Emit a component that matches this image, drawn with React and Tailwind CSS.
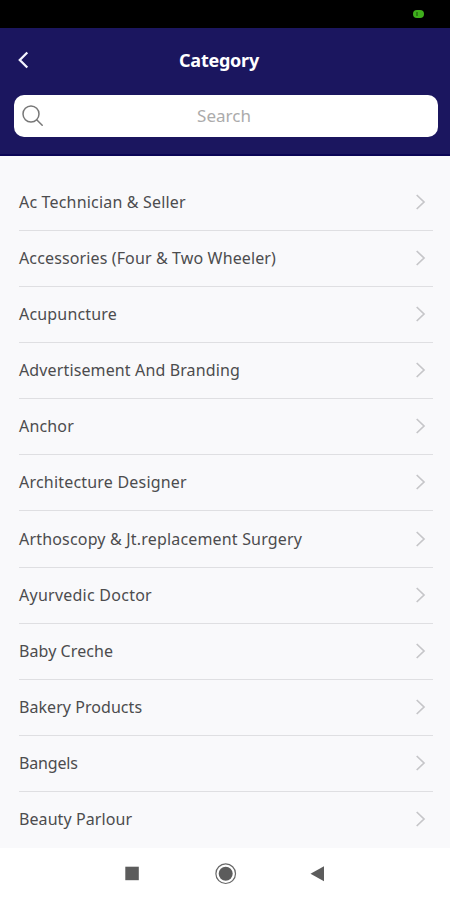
import React, { useState } from 'react';

const categories = [
  { name: 'Ac Technician & Seller', tracking: 'tracking-[0.18px]' },
  { name: 'Accessories (Four & Two Wheeler)', tracking: 'tracking-[0.13px]' },
  { name: 'Acupuncture', tracking: 'tracking-[0.18px]' },
  { name: 'Advertisement And Branding', tracking: 'tracking-[0.13px]' },
  { name: 'Anchor', tracking: 'tracking-[0.17px]' },
  { name: 'Architecture Designer', tracking: 'tracking-[0.2px]' },
  { name: 'Arthoscopy & Jt.replacement Surgery', tracking: 'tracking-[0.18px]' },
  { name: 'Ayurvedic Doctor', tracking: 'tracking-[0.25px]' },
  { name: 'Baby Creche', tracking: 'tracking-[0.08px]' },
  { name: 'Bakery Products', tracking: 'tracking-[0.05px]' },
  { name: 'Bangels', tracking: 'tracking-[-0.18px]' },
  { name: 'Beauty Parlour', tracking: 'tracking-[0.08px]' },
];

const StatusBar = () => (
  <div className="h-[28px] shrink-0 bg-black flex items-center justify-end pr-[26px]">
    <span className="w-[11px] h-[8px] rounded-full bg-[#3fae1c] flex items-center pl-[3px]">
      <span className="w-[2px] h-[4px] bg-[#2a7d12]" />
    </span>
  </div>
);

const Header = ({ query, onSearch }) => (
  <header className="h-[128px] shrink-0 bg-[#1b165f] border-b-2 border-[#0b0656]">
    {/* Title row */}
    <div className="grid grid-cols-[40px_1fr_40px] items-center h-[64px] pr-[12px]">
      <button className="pl-[17px]" title="Back">
        <svg width="12" height="18" viewBox="0 0 12 18" fill="none" stroke="#f4f4ff" strokeWidth="2.3">
          <path d="M10.3 1.5 L2.8 9 L10.3 16.5" />
        </svg>
      </button>
      <h1 className="text-center text-[18px] leading-6 font-bold tracking-[-0.25px] text-white">Category</h1>
    </div>

    {/* Search */}
    <label className="flex items-center h-[42px] ml-[14px] mr-[12px] mt-[3px] px-[8px] bg-white rounded-[10px]">
      <svg width="22" height="22" viewBox="0 0 22 22" fill="none" stroke="#777777" strokeWidth="1.5" strokeLinecap="round">
        <circle cx="9" cy="9" r="8" />
        <path d="M14.7 14.7 L20.2 20.2" />
      </svg>
      <input
        value={query}
        onChange={(e) => onSearch(e.target.value)}
        placeholder="Search"
        className="flex-1 min-w-0 pr-[26px] text-center text-[17px] text-[#333333] placeholder:text-[#ababab] outline-none"
      />
    </label>
  </header>
);

const CategoryRow = ({ name, tracking }) => (
  <li className="flex items-center justify-between h-[56.15px] ml-[19px] mr-[17px] pr-[7px] pb-[0.9px] border-b border-[#dfdfe2] last:border-transparent">
    <span className={`text-[16px] leading-6 text-[#4c4c4e] whitespace-nowrap ${tracking}`}>{name}</span>
    <svg width="11" height="16" viewBox="0 0 11 16" fill="none" stroke="#c6c6c9" strokeWidth="1.7">
      <path d="M1.7 1 L9 8 L1.7 15" />
    </svg>
  </li>
);

const NavBar = () => (
  <nav className="h-[52px] shrink-0 bg-white">
    <svg width="450" height="52" viewBox="0 0 450 52">
      <rect x="125.3" y="18.7" width="13.5" height="13.5" fill="#5c5c5c" />
      <circle cx="225.7" cy="25.7" r="9.8" fill="none" stroke="#686868" strokeWidth="1.2" />
      <circle cx="225.7" cy="25.7" r="7" fill="#5c5c5c" />
      <path d="M310.5 25.7 L324 18.2 V33.2 Z" fill="#5c5c5c" />
    </svg>
  </nav>
);

const App = () => {
  const [query, setQuery] = useState('');
  const visible = categories.filter((c) => c.name.toLowerCase().includes(query.toLowerCase()));

  return (
    <div className="w-[450px] h-[900px] flex flex-col overflow-hidden bg-[#f9f9fb] font-['Noto_Sans',sans-serif]">
      <StatusBar />
      <Header query={query} onSearch={setQuery} />
      <ul className="flex-1 min-h-0 overflow-hidden pt-[18.6px]">
        {visible.map((c) => (
          <CategoryRow key={c.name} name={c.name} tracking={c.tracking} />
        ))}
      </ul>
      <NavBar />
    </div>
  );
};

export default App;
